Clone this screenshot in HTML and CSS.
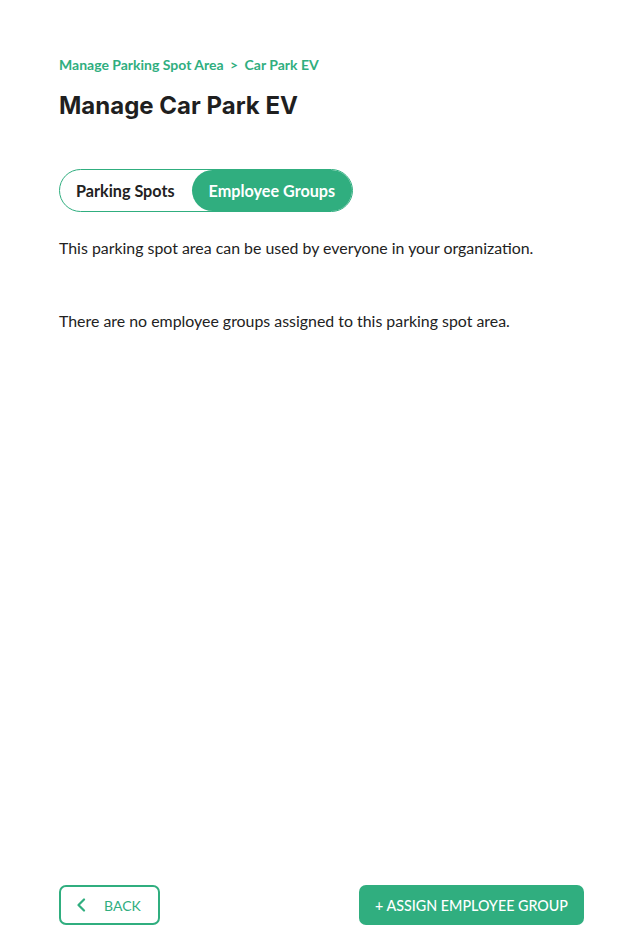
FILE: index.html
```html
<!DOCTYPE html>
<html lang="en">
<head>
    <meta charset="UTF-8">
    <title>Manage Car Park EV</title>
    <link rel="stylesheet" href="styles.css">
</head>
<body>
    <div class="page">
        <nav class="breadcrumb">
            <a href="#">Manage Parking Spot Area</a>
            <span class="sep">&gt;</span>
            <a href="#">Car Park EV</a>
        </nav>

        <h1>Manage Car Park EV</h1>

        <div class="toggle">
            <button type="button" class="toggle-item">Parking Spots</button>
            <button type="button" class="toggle-item active">Employee Groups</button>
        </div>

        <p class="info">This parking spot area can be used by everyone in your organization.</p>

        <p class="empty">There are no employee groups assigned to this parking spot area.</p>

        <div class="actions">
            <button type="button" class="btn btn-outline">
                <svg width="10" height="14" viewBox="0 0 10 14"><path d="M8 1.5 2.5 7 8 12.5" fill="none" stroke="currentColor" stroke-width="2.2" stroke-linecap="round" stroke-linejoin="round"/></svg>
                <span>BACK</span>
            </button>
            <button type="button" class="btn btn-primary">+ ASSIGN EMPLOYEE GROUP</button>
        </div>
    </div>
</body>
</html>
```

FILE: styles.css
```css
* {
    margin: 0;
    padding: 0;
    box-sizing: border-box;
}

body {
    font-family: Lato, 'Noto Sans', sans-serif;
    color: #222;
    background: #fff;
}

.page {
    min-height: 100vh;
    display: flex;
    flex-direction: column;
    padding: 56px 58px 18px 59px;
}

.breadcrumb {
    font-size: 14px;
    font-weight: 700;
    color: #30ae7f;
    line-height: 18px;
}

.breadcrumb a {
    color: inherit;
    text-decoration: none;
}

.breadcrumb .sep {
    margin: 0 3px;
}

h1 {
    font-family: Inter, sans-serif;
    font-size: 24px;
    font-weight: 700;
    line-height: 30px;
    margin-top: 17px;
    color: #1f1f1f;
}

.toggle {
    align-self: flex-start;
    display: flex;
    margin-top: 48px;
    border: 1px solid #30ae7f;
    border-radius: 22px;
    height: 43px;
}

.toggle-item {
    font-family: Lato, sans-serif;
    font-size: 16.2px;
    font-weight: 700;
    color: #222;
    background: none;
    border: none;
    border-radius: 21px;
    padding: 0 17px 0 16px;
    cursor: pointer;
}

.toggle-item.active {
    background: #30ae7f;
    color: #fff;
    padding: 0 17px;
}

.info {
    font-size: 15.9px;
    margin-top: 25px;
    line-height: 22px;
}

.empty {
    font-size: 15.9px;
    margin-top: 51px;
    line-height: 22px;
}

.actions {
    margin-top: auto;
    display: flex;
    justify-content: space-between;
    align-items: center;
}

.btn {
    height: 40px;
    font-family: Lato, sans-serif;
    font-size: 14px;
    border-radius: 7px;
    cursor: pointer;
    display: flex;
    align-items: center;
}

.btn-outline {
    width: 101px;
    border: 2px solid #30ae7f;
    background: #fff;
    color: #30ae7f;
    padding: 0 0 0 15px;
    gap: 18px;
}

.btn-primary {
    border: none;
    background: #30ae7f;
    color: #fff;
    padding: 0 16px;
    font-size: 14.3px;
    font-weight: 500;
}
```
